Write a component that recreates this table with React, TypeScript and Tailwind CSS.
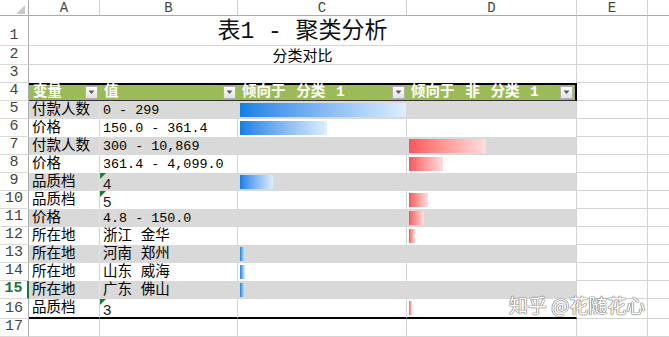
import React from "react";

type R = {
  n: number;
  a: string;
  b: string;
  kind: "num" | "cjk" | "digit";
  c?: number;
  d?: number;
  grey: boolean;
  sel?: boolean;
  last?: boolean;
};

const rows: R[] = [
  { n: 5, a: "付款人数", b: "0 - 299", kind: "num", c: 166, grey: true },
  { n: 6, a: "价格", b: "150.0 - 361.4", kind: "num", c: 87, grey: false },
  { n: 7, a: "付款人数", b: "300 - 10,869", kind: "num", d: 77, grey: true },
  { n: 8, a: "价格", b: "361.4 - 4,099.0", kind: "num", d: 34, grey: false },
  { n: 9, a: "品质档", b: "4", kind: "digit", c: 33, grey: true },
  { n: 10, a: "品质档", b: "5", kind: "digit", d: 19, grey: false },
  { n: 11, a: "价格", b: "4.8 - 150.0", kind: "num", d: 15, grey: true },
  { n: 12, a: "所在地", b: "浙江 金华", kind: "cjk", d: 6, grey: false },
  { n: 13, a: "所在地", b: "河南 郑州", kind: "cjk", c: 5, grey: true },
  { n: 14, a: "所在地", b: "山东 威海", kind: "cjk", c: 5, grey: false },
  { n: 15, a: "所在地", b: "广东 佛山", kind: "cjk", c: 5, grey: true, sel: true },
  { n: 16, a: "品质档", b: "3", kind: "digit", d: 3, grey: false, last: true },
];

function RH({ n, sel }: { n?: number; sel?: boolean }) {
  return (
    <div
      className={`w-[29px] shrink-0 flex items-end justify-center pb-[3px] border-b border-b-[#dadada] bg-white font-['Liberation_Mono',monospace] text-[15px] leading-[12px] ${
        sel
          ? "border-r-2 border-r-[#217346] text-[#217346] font-bold"
          : "border-r border-r-[#ababab] text-[#444]"
      }`}
    >
      {n}
    </div>
  );
}

function EF() {
  return (
    <>
      <div className="w-[71px] shrink-0 border-r border-b border-[#d4d4d4]" />
      <div className="w-[21px] shrink-0 border-b border-[#d4d4d4]" />
    </>
  );
}

function Drop() {
  return (
    <div className="w-[13px] h-[13px] shrink-0 flex items-center justify-center bg-linear-to-b from-[#ffffff] to-[#e2e2e2] border border-[#b0b0b0]">
      <svg width="7" height="5" viewBox="0 0 7 5">
        <polygon points="0.5,0.5 6.5,0.5 3.5,4" fill="#5a5a5a" />
      </svg>
    </div>
  );
}

function Tri() {
  return (
    <svg className="absolute left-0 top-0" width="6" height="6" viewBox="0 0 6 6">
      <polygon points="0,0 6,0 0,6" fill="#1f7a2e" />
    </svg>
  );
}

const CJK = "font-['Liberation_Mono','Noto_Sans_CJK_SC',monospace] text-[14.5px] leading-[15px] text-black";

function DataRow({ r }: { r: R }) {
  const bg = r.grey ? "bg-[#d9d9d9]" : "bg-white";
  const sepA = r.grey ? "border-r-[#e3e3e3]" : "border-r-[#d4d4d4]";
  const sep = r.grey ? "border-r-[#d9d9d9]" : "border-r-[#d4d4d4]";
  const bot = r.last ? "border-b-2 border-b-black" : "";
  return (
    <div className={`flex ${r.last ? "h-[20px]" : "h-[18px]"}`}>
      <RH n={r.n} sel={r.sel} />
      <div className={`w-[71px] shrink-0 flex items-center pl-[3px] pt-[1px] border-r ${sepA} ${bg} ${bot}`}>
        <span className={CJK}>{r.a}</span>
      </div>
      <div className={`w-[138px] shrink-0 relative flex items-center pl-[3px] pt-[1px] border-r ${sep} ${bg} ${bot}`}>
        {r.kind === "num" && (
          <span className="font-['Liberation_Mono',monospace] text-[13.4px] leading-[14px] text-black whitespace-pre">
            {r.b}
          </span>
        )}
        {r.kind === "cjk" && <span className={`${CJK} whitespace-pre`}>{r.b}</span>}
        {r.kind === "digit" && (
          <>
            <Tri />
            <span className="font-['Liberation_Sans',sans-serif] text-[15px] leading-[15px] text-[#222] pt-[1px]">
              {r.b}
            </span>
          </>
        )}
      </div>
      <div className={`w-[169px] shrink-0 flex items-center pl-[2px] border-r ${sep} ${bg} ${bot}`}>
        {r.c !== undefined && (
          <div
            className="h-[14px] bg-linear-to-r from-[#0a80e4] to-[#ddeeff]"
            style={{ width: r.c }}
          />
        )}
      </div>
      <div className={`w-[170px] shrink-0 flex items-center pl-[2px] border-r border-r-[#d4d4d4] ${bg} ${bot}`}>
        {r.d !== undefined && (
          <div
            className="h-[14px] bg-linear-to-r from-[#f9535a] to-[#ffdede]"
            style={{ width: r.d }}
          />
        )}
      </div>
      <EF />
    </div>
  );
}

function HeadCell({ w, label, last }: { w: string; label: string; last?: boolean }) {
  return (
    <div
      className={`${w} shrink-0 flex items-center justify-between pl-[4px] pr-[2px] bg-[#9bbb59] border-t-2 border-t-black border-b border-b-[#333] ${
        last ? "border-r-2 border-r-black" : ""
      }`}
    >
      <span className="font-['Liberation_Mono','Noto_Sans_CJK_SC',monospace] text-[14.5px] leading-[15px] font-bold text-white whitespace-pre [word-spacing:2px]">
        {label}
      </span>
      <Drop />
    </div>
  );
}

export default function App() {
  const colHead = "shrink-0 flex items-center justify-center border-r border-r-[#d0d0d0] border-b border-b-[#ababab] bg-white font-['Liberation_Mono',monospace] text-[14px] text-[#444] leading-none";
  return (
    <div className="relative w-[669px] h-[337px] overflow-hidden bg-white">
      {/* column header */}
      <div className="flex h-[16px]">
        <div className="w-[29px] shrink-0 relative border-r border-b border-[#ababab] bg-white">
          <svg className="absolute left-0 top-0" width="28" height="15" viewBox="0 0 28 15">
            <polygon points="25,5 25,14 16,14" fill="#c9c9c9" />
          </svg>
        </div>
        <div className={`w-[71px] ${colHead}`}>A</div>
        <div className={`w-[138px] ${colHead}`}>B</div>
        <div className={`w-[169px] ${colHead}`}>C</div>
        <div className={`w-[170px] ${colHead}`}>D</div>
        <div className={`w-[71px] ${colHead}`}>E</div>
        <div className="w-[21px] shrink-0 border-b border-b-[#ababab] bg-white" />
      </div>

      {/* row 1 */}
      <div className="flex h-[30px]">
        <RH n={1} />
        <div className="w-[548px] shrink-0 flex items-end justify-center border-r border-b border-[#d4d4d4]">
          <span className="font-['Liberation_Mono','Noto_Sans_CJK_SC',monospace] text-[23px] leading-[26px] text-[#111] whitespace-pre">
            表1 - 聚类分析
          </span>
        </div>
        <EF />
      </div>

      {/* row 2 */}
      <div className="flex h-[19px]">
        <RH n={2} />
        <div className="w-[548px] shrink-0 flex items-end justify-center pb-[1px] border-r border-b border-[#d4d4d4]">
          <span className="font-['Noto_Sans_CJK_SC',sans-serif] text-[15px] leading-[16px] text-black">
            分类对比
          </span>
        </div>
        <EF />
      </div>

      {/* row 3 */}
      <div className="flex h-[18px]">
        <RH n={3} />
        <div className="w-[548px] shrink-0 border-r border-[#d4d4d4]" />
        <EF />
      </div>

      {/* row 4 table header */}
      <div className="flex h-[18px]">
        <RH n={4} />
        <HeadCell w="w-[71px]" label="变量" />
        <HeadCell w="w-[138px]" label="值" />
        <HeadCell w="w-[169px]" label="倾向于 分类 1" />
        <HeadCell w="w-[170px]" label="倾向于 非 分类 1" last />
        <EF />
      </div>

      {rows.map((r) => (
        <DataRow key={r.n} r={r} />
      ))}

      {/* row 17 */}
      <div className="flex h-[18px]">
        <RH n={17} />
        <div className="w-[71px] shrink-0 border-r border-b border-[#d4d4d4]" />
        <div className="w-[138px] shrink-0 border-r border-b border-[#d4d4d4]" />
        <div className="w-[169px] shrink-0 border-r border-b border-[#d4d4d4]" />
        <div className="w-[170px] shrink-0 border-r border-b border-[#d4d4d4]" />
        <EF />
      </div>

      {/* watermark */}
      <div className="absolute left-[509px] top-[293px] font-['Noto_Sans_CJK_SC',sans-serif] text-[19px] leading-[24px] text-white whitespace-pre [text-shadow:0_0_1px_#777,0_0_1px_#777,0_0_1px_#777,0_0_1px_#777]">
        知乎 @花随花心
      </div>
    </div>
  );
}
